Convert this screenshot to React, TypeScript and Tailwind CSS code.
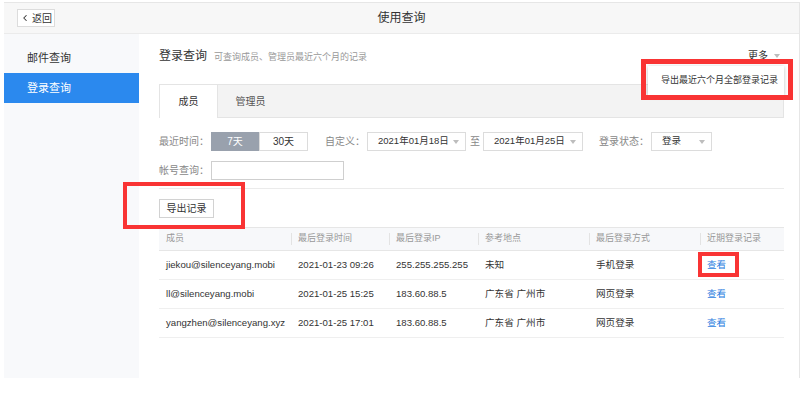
import React from 'react';
import { ChevronLeft } from 'lucide-react';

type Row = { member: string; time: string; ip: string; place: string; method: string };

const rows: Row[] = [
  { member: 'jiekou@silenceyang.mobi', time: '2021-01-23 09:26', ip: '255.255.255.255', place: '未知', method: '手机登录' },
  { member: 'll@silenceyang.mobi', time: '2021-01-25 15:25', ip: '183.60.88.5', place: '广东省 广州市', method: '网页登录' },
  { member: 'yangzhen@silenceyang.xyz', time: '2021-01-25 17:01', ip: '183.60.88.5', place: '广东省 广州市', method: '网页登录' },
];

const headers = ['成员', '最后登录时间', '最后登录IP', '参考地点', '最后登录方式', '近期登录记录'];
const colWidths = ['w-[132px]', 'w-[98px]', 'w-[89px]', 'w-[111px]', 'w-[111px]', 'w-[84px]'];

const Caret = () => (
  <span className="inline-block w-0 h-0 border-l-[3px] border-r-[3px] border-t-[4px] border-l-transparent border-r-transparent border-t-[#bdbdbd]" />
);

const Select = ({ value, width }: { value: string; width: string }) => (
  <div className={`${width} h-[19px] border border-[#dcdcdc] bg-white flex items-center justify-between pl-[10px] pr-[6px] text-[9.5px] text-[#333]`}>
    <span>{value}</span>
    <Caret />
  </div>
);

const App: React.FC = () => {
  return (
    <div className="relative w-[804px] h-[397px] bg-white pt-[2px] pl-[4px] font-['Liberation_Sans','Noto_Sans_CJK_SC',sans-serif] text-[#333]">
      <div className="w-[796px] h-[376px] border-t border-r border-[#e6e6e6] flex flex-col">
        {/* Header */}
        <header className="h-[31px] shrink-0 bg-[#f7f7f7] border-b border-[#ebebeb] grid grid-cols-[1fr_auto_1fr] items-center px-[13px]">
          <div>
            <button className="w-[38px] h-[18px] bg-white border border-[#dcdcdc] flex items-center justify-center gap-[2px] text-[10px] text-[#333]">
              <ChevronLeft className="w-[10px] h-[10px]" strokeWidth={2.5} />
              返回
            </button>
          </div>
          <div className="text-[12px] text-[#333]">使用查询</div>
          <div />
        </header>

        <div className="flex flex-1">
          {/* Sidebar */}
          <aside className="w-[135px] shrink-0 bg-[#f8f9fb] pt-[9px]">
            <div className="h-[30px] pl-[23px] flex items-center text-[11px] text-[#333]">邮件查询</div>
            <div className="h-[30px] pl-[23px] flex items-center text-[11px] text-white bg-[#2b89ee]">登录查询</div>
          </aside>

          {/* Main */}
          <main className="flex-1 pl-[20px] pr-[15px] pt-[14px]">
            <div className="h-[16px] flex items-end justify-between">
              <div className="flex items-end gap-[7px]">
                <span className="text-[12px] leading-[16px] text-[#333]">登录查询</span>
                <span className="text-[9px] leading-[13px] text-[#999]">可查询成员、管理员最近六个月的记录</span>
              </div>
              <div className="flex items-center gap-[6px] pr-[4px] text-[10px] text-[#333] leading-[16px]">
                更多
                <Caret />
              </div>
            </div>

            {/* Tabs */}
            <div className="mt-[20px] h-[34px] bg-[#f3f3f3] border border-[#e4e4e4] flex">
              <div className="w-[58px] -mb-px bg-white border-r border-[#e4e4e4] flex items-center justify-center text-[10px] text-[#333]">成员</div>
              <div className="w-[65px] flex items-center justify-center text-[10px] text-[#555]">管理员</div>
            </div>

            {/* Filters */}
            <div className="mt-[14px] h-[19px] flex items-center text-[10px]">
              <span className="w-[52px] text-[#888]">最近时间：</span>
              <div className="w-[48px] h-[19px] bg-[#99a1ad] text-white flex items-center justify-center">7天</div>
              <div className="w-[49px] h-[19px] border border-[#dcdcdc] flex items-center justify-center text-[#333]">30天</div>
              <span className="ml-[17px] w-[42px] text-[#888]">自定义：</span>
              <Select value="2021年01月18日" width="w-[99px]" />
              <span className="ml-[4px] mr-[3px] text-[#888]">至</span>
              <Select value="2021年01月25日" width="w-[100px]" />
              <span className="ml-[16px] w-[52px] text-[#888]">登录状态：</span>
              <Select value="登录" width="w-[61px]" />
            </div>
            <div className="mt-[10px] h-[19px] flex items-center text-[10px]">
              <span className="w-[52px] text-[#888]">帐号查询：</span>
              <input className="w-[133px] h-[19px] border border-[#cfcfcf] outline-none" />
            </div>

            <div className="mt-[8px] border-t border-[#ebebeb]" />

            <button className="mt-[10px] w-[55px] h-[19px] border border-[#d2d2d2] bg-white text-[10px] text-[#333] flex items-center justify-center">导出记录</button>

            {/* Table */}
            <table className="mt-[9px] w-[625px] table-fixed border-collapse">
              <thead>
                <tr className="h-[23px] bg-[#f7f8fa] border-t border-b border-[#e6e6e6]">
                  {headers.map((h, i) => (
                    <th key={h} className={`${colWidths[i]} p-0 text-left font-normal text-[9px] text-[#999]`}>
                      {i === 0 ? (
                        <span className="pl-[7px]">{h}</span>
                      ) : (
                        <div className="flex items-center">
                          <span className="w-px h-[12px] bg-[#e3e3e3] mr-[6px]" />
                          {h}
                        </div>
                      )}
                    </th>
                  ))}
                </tr>
              </thead>
              <tbody>
                {rows.map((r) => (
                  <tr key={r.member} className="h-[29px] border-b border-[#efefef] text-[9.6px] text-[#333]">
                    <td className="pl-[7px] whitespace-nowrap">{r.member}</td>
                    <td className="pl-[7px]">{r.time}</td>
                    <td className="pl-[7px]">{r.ip}</td>
                    <td className="pl-[7px]">{r.place}</td>
                    <td className="pl-[7px]">{r.method}</td>
                    <td className="pl-[7px] text-[#2b7de0]">查看</td>
                  </tr>
                ))}
              </tbody>
            </table>
          </main>
        </div>
      </div>

      {/* Dropdown menu */}
      <div className="absolute left-[648px] top-[66px] w-[136px] h-[29px] bg-white shadow-[0_1px_4px_rgba(0,0,0,0.25)] flex items-center pl-[13px] text-[9px] text-[#333]">
        导出最近六个月全部登录记录
      </div>

      {/* Red annotation boxes */}
      <div className="absolute left-[641px] top-[59px] w-[152px] h-[41px] border-[5px] border-[#f93434]" />
      <div className="absolute left-[123px] top-[182px] w-[122px] h-[47px] border-[4px] border-[#f93434]" />
      <div className="absolute left-[698px] top-[252px] w-[41px] h-[25px] border-[4px] border-[#f93434]" />
    </div>
  );
};

export default App;
